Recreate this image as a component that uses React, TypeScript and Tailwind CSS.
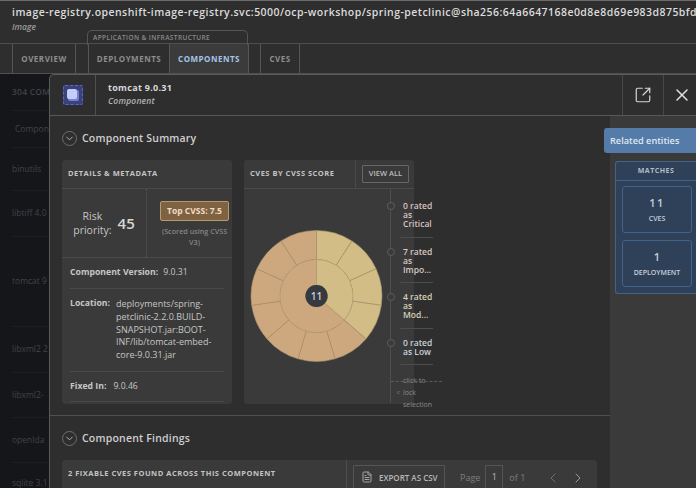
import React from "react";
import { ChevronDown, ChevronLeft, ChevronRight, FileText, SquareArrowOutUpRight, X } from "lucide-react";

const font = { fontFamily: '"Open Sans", sans-serif' };

function Donut() {
  const cx = 72.5;
  const cy = 107;
  const pt = (r: number, deg: number) => {
    const a = ((deg - 90) * Math.PI) / 180;
    return `${cx + r * Math.cos(a)} ${cy + r * Math.sin(a)}`;
  };
  const sector = (r0: number, r1: number, s: number, e: number) => {
    const large = e - s > 180 ? 1 : 0;
    return `M ${pt(r1, s)} A ${r1} ${r1} 0 ${large} 1 ${pt(r1, e)} L ${pt(r0, e)} A ${r0} ${r0} 0 ${large} 0 ${pt(r0, s)} Z`;
  };
  const step = 360 / 11;
  const yellow = "#d1bd85";
  const orange = "#cda87e";
  return (
    <svg width="146" height="214" className="block shrink-0">
      {Array.from({ length: 11 }).map((_, i) => (
        <path
          key={i}
          d={sector(36.5, 65.5, i * step, (i + 1) * step)}
          fill={i < 4 ? yellow : orange}
          stroke="#a8906c"
          strokeWidth="0.6"
        />
      ))}
      <path d={sector(11, 36.5, 0, 4 * step)} fill={yellow} stroke="#b39f73" strokeWidth="0.6" />
      <path d={sector(11, 36.5, 4 * step, 360)} fill={orange} stroke="#b39f73" strokeWidth="0.6" />
      <circle cx={cx} cy={cy} r="11" fill="#363a40" />
      <text x={cx} y={cy + 3.5} textAnchor="middle" fontSize="10" fontWeight="600" fill="#c9ccd0" style={font}>
        11
      </text>
    </svg>
  );
}

function LegendItem({
  lines,
  color,
  h,
  dot,
  text,
}: {
  lines: string[];
  color: string;
  h: string;
  dot: string;
  text: string;
}) {
  return (
    <div className={`relative pl-[12px] ${h}`}>
      <span className={`absolute left-[-4px] h-[8px] w-[8px] rounded-full border border-[#5e5e5e] bg-[#3a3a3a] ${dot}`} />
      <div className={`text-[8.5px] font-semibold leading-[9px] ${text}`} style={{ color }}>
        {lines.map((l) => (
          <div key={l} className="whitespace-nowrap">
            {l}
          </div>
        ))}
      </div>
      <div className="absolute bottom-0 left-[9px] h-px w-[33px] bg-[#4d4d4d]" />
    </div>
  );
}

const rows: [string, string][] = [
  ["304 COM", "h-[37px] font-semibold tracking-wide"],
  ["Compon", "h-[37px] pl-[3px]"],
  ["binutils", "h-[43px]"],
  ["libtiff 4.0", "h-[46px]"],
  ["tomcat 9", "h-[90px]"],
  ["libxml2 2", "h-[46px]"],
  ["libxml2-", "h-[45px]"],
  ["openlda", "h-[45px]"],
  ["sqlite 3.1", "h-[42px]"],
];

function Tab({ label, w, active, sep }: { label: string; w: string; active?: boolean; sep?: boolean }) {
  return (
    <div
      className={`flex h-full items-center justify-center text-[8px] font-bold tracking-[0.5px] ${w} ${
        active ? "bg-[#3b3b3b] text-[#a3c4e8]" : "text-[#8d8d8d]"
      } ${sep ? "border-l border-[#555]" : ""}`}
    >
      {label}
    </div>
  );
}

export default function App() {
  return (
    <div className="relative flex h-[488px] w-[696px] flex-col overflow-hidden bg-[#2e2e2e]" style={font}>
      <div className="h-[1px] bg-[#6a6a6a]" />
      <header className="flex h-[43px] shrink-0 flex-col overflow-hidden border-b border-[#505050] pl-[12px] pt-[4px]">
        <div className="whitespace-nowrap text-[10.5px] font-semibold leading-[15px] tracking-[0.45px] text-[#dcdcdc]">
          image-registry.openshift-image-registry.svc:5000/ocp-workshop/spring-petclinic@sha256:64a6647168e0d8e8d69e983d875bfda7c
        </div>
        <div className="text-[8.5px] font-semibold italic leading-[14px] text-[#9a9a9a]">Image</div>
      </header>

      <nav className="flex h-[30px] shrink-0 items-stretch border-b border-[#505050] pl-[12px]">
        <div className="flex border-x border-[#555]">
          <Tab label="OVERVIEW" w="w-[62px]" />
        </div>
        <div className="w-[12px]" />
        <div className="flex border-x border-[#555]">
          <Tab label="DEPLOYMENTS" w="w-[80px]" />
          <Tab label="COMPONENTS" w="w-[79px]" active sep />
        </div>
        <div className="w-[11px]" />
        <div className="flex border-x border-[#555]">
          <Tab label="CVES" w="w-[38px]" />
        </div>
      </nav>

      <div className="absolute left-[87px] top-[30px] flex h-[15px] w-[161px] items-center rounded-t-[5px] border border-b-0 border-[#555] pl-[5px] text-[6.5px] font-semibold tracking-[0.4px] text-[#8a8a8a]">
        APPLICATION &amp; INFRASTRUCTURE
      </div>

      <main className="flex-1 overflow-hidden bg-[#15161a] pl-[12px]">
        {rows.map(([t, c]) => (
          <div key={t} className={`flex items-center whitespace-nowrap border-b border-[#1d1e22] text-[8.5px] text-[#414247] ${c}`}>
            {t}
          </div>
        ))}
      </main>

      <section className="absolute left-[49px] top-[74px] flex h-[414px] w-[647px] flex-col rounded-tl-[5px] border-l border-t border-[#5a5a5a] bg-[#2e2e2e]">
        <div className="flex h-[41px] shrink-0 border-b border-[#585858]">
          <div className="flex w-[46px] items-center justify-center border-r border-[#505050]">
            <div className="relative h-[20px] w-[20px] rounded-[2px] border border-dashed border-[#5a66c8] bg-[#39427a]">
              <div className="absolute left-[4px] top-[4px] h-[11px] w-[11px] rounded-[2px] bg-[#7481d0]" />
              <div className="absolute left-[3px] top-[3px] h-[10px] w-[10px] rounded-[2px] bg-[#c3cdfa]" />
            </div>
          </div>
          <div className="flex-1 pl-[12px] pt-[6px]">
            <div className="text-[9px] font-bold leading-[13px] tracking-[0.3px] text-[#d8d8d8]">tomcat 9.0.31</div>
            <div className="text-[8.5px] font-semibold italic leading-[13px] tracking-[0.2px] text-[#b4b4b4]">Component</div>
          </div>
          <div className="flex w-[41px] items-center justify-center border-l border-[#484848] text-[#d5d5d5]">
            <SquareArrowOutUpRight size={18} strokeWidth={1.6} />
          </div>
          <div className="flex w-[33px] items-center justify-center border-l border-[#484848] pl-[3px] text-[#e0e0e0]">
            <X size={20} strokeWidth={1.8} />
          </div>
        </div>

        <div className="flex min-h-0 flex-1">
          <div className="w-[560px] shrink-0 overflow-hidden">
            <div className="flex h-[44px] items-center gap-[5px] pl-[12px] pt-[1px]">
              <span className="flex h-[15px] w-[15px] items-center justify-center rounded-full border border-[#6e6e6e] text-[#bdbdbd]">
                <ChevronDown size={11} />
              </span>
              <span className="text-[10.5px] font-semibold tracking-[0.2px] text-[#cfcfcf]">Component Summary</span>
            </div>

            <div className="flex h-[244px] gap-[12px] pl-[12px]">
              <div className="flex h-[244px] w-[170px] shrink-0 flex-col rounded-[3px] bg-[#3a3a3a]">
                <div className="flex h-[29px] items-center border-b border-[#4a4a4a] pl-[6px] text-[7.5px] font-bold tracking-[0.5px] text-[#c4c4c4]">
                  DETAILS &amp; METADATA
                </div>
                <div className="flex h-[69px] border-b border-[#4a4a4a]">
                  <div className="flex w-[85px] items-center justify-center gap-[6px] border-r border-dotted border-[#555]">
                    <div className="text-center text-[10.5px] leading-[14.5px] text-[#c4c4c4]">
                      Risk
                      <br />
                      priority:
                    </div>
                    <div className="text-[15px] font-semibold text-[#d6d6d6]">45</div>
                  </div>
                  <div className="flex flex-1 flex-col items-center pl-[10px] pt-[12px]">
                    <div className="flex h-[20px] w-[69px] items-center justify-center rounded-[2px] border border-[#b79a6b] bg-[#7f6242] text-[8.5px] font-bold text-[#f0dcc0]">
                      Top CVSS: 7.5
                    </div>
                    <div className="mt-[5px] whitespace-nowrap text-center text-[7.2px] font-semibold leading-[11px] text-[#858585]">
                      (Scored using CVSS
                      <br />
                      V3)
                    </div>
                  </div>
                </div>
                <div className="flex-1 px-[8px] text-[8.7px] text-[#c6c6c6]">
                  <div className="flex h-[31px] items-center gap-[5px] border-b border-[#4a4a4a]">
                    <span className="font-bold">Component Version:</span>
                    <span>9.0.31</span>
                  </div>
                  <div className="flex h-[83px] items-center gap-[6px] border-b border-[#4a4a4a]">
                    <span className="self-start pt-[8px] font-bold leading-[13px]">Location:</span>
                    <span className="w-[104px] text-[9px] leading-[12.8px]">
                      deployments/spring-
                      <br />
                      petclinic-2.2.0.BUILD-
                      <br />
                      SNAPSHOT.jar:BOOT-
                      <br />
                      INF/lib/tomcat-embed-
                      <br />
                      core-9.0.31.jar
                    </span>
                  </div>
                  <div className="flex h-[30px] items-center gap-[7px] border-b border-[#4a4a4a]">
                    <span className="font-bold">Fixed In:</span>
                    <span>9.0.46</span>
                  </div>
                </div>
              </div>

              <div className="flex h-[244px] w-[170px] shrink-0 flex-col rounded-[3px] bg-[#3a3a3a]">
                <div className="flex h-[29px] shrink-0 items-center border-b border-[#4a4a4a]">
                  <div className="w-[111px] pl-[6px] text-[7.5px] font-bold tracking-[0.5px] text-[#c4c4c4]">CVES BY CVSS SCORE</div>
                  <div className="flex h-full flex-1 items-center border-l border-[#4a4a4a] pl-[6px]">
                    <div className="flex h-[18px] w-[47px] items-center justify-center rounded-[1px] border border-[#666] text-[7.5px] font-semibold text-[#bdbdbd]">
                      VIEW ALL
                    </div>
                  </div>
                </div>
                <div className="flex">
                  <Donut />
                  <div className="h-[214px] w-[52px] shrink-0 border-l border-[#4f4f4f]">
                    <LegendItem lines={["0 rated", "as", "Critical"]} color="#d8c2c2" h="h-[49px]" dot="top-[13px]" text="pt-[12px]" />
                    <LegendItem lines={["7 rated", "as", "Impo..."]} color="#d8c8c0" h="h-[45px]" dot="top-[10px]" text="pt-[9px]" />
                    <LegendItem lines={["4 rated", "as", "Mod..."]} color="#d8d0b8" h="h-[46px]" dot="top-[10px]" text="pt-[9px]" />
                    <LegendItem lines={["0 rated", "as Low"]} color="#c8d2dc" h="h-[36px]" dot="top-[10px]" text="pt-[9px]" />
                    <div className="relative pl-[12px] pt-[10px] text-[7px] leading-[12px] text-[#8a8a8a]">
                      <div className="absolute left-0 right-0 top-[16px] border-t border-dashed border-[#5a5a5a]" />
                      <span className="absolute left-[6px] top-[21px] text-[6px]">c</span>
                      click to
                      <br />
                      lock
                      <br />
                      selection
                    </div>
                  </div>
                </div>
              </div>
            </div>

            <div className="mt-[11px] h-px bg-[#505050]" />

            <div className="flex h-[44px] items-center gap-[5px] pl-[12px] pt-[1px]">
              <span className="flex h-[15px] w-[15px] items-center justify-center rounded-full border border-[#6e6e6e] text-[#bdbdbd]">
                <ChevronDown size={11} />
              </span>
              <span className="text-[10.5px] font-semibold tracking-[0.2px] text-[#cfcfcf]">Component Findings</span>
            </div>

            <div className="ml-[12px] flex h-[40px] w-[535px] rounded-t-[3px] bg-[#3a3a3a]">
              <div className="flex h-[28px] w-[285px] items-center border-r border-[#4d4d4d] pl-[6px] text-[7.5px] font-bold tracking-[0.5px] text-[#c4c4c4]">
                2 FIXABLE CVES FOUND ACROSS THIS COMPONENT
              </div>
              <div className="ml-[6px] mt-[5px] flex h-[30px] w-[92px] gap-[6px] rounded-[1px] border border-[#555] pl-[7px] pt-[5px] text-[8px] font-semibold text-[#b8b8b8]">
                <FileText size={12} className="text-[#a5a5a5]" />
                <span className="whitespace-nowrap leading-[13px]">EXPORT AS CSV</span>
              </div>
              <div className="ml-[15px] mt-[5px] flex h-[30px] text-[9px] text-[#7e7e7e]">
                <span className="pt-[6px]">Page</span>
                <span className="ml-[5px] flex h-[24px] w-[18px] items-center justify-center border border-[#555] text-[#bdbdbd]">1</span>
                <span className="ml-[6px] pt-[6px]">of 1</span>
                <ChevronLeft size={16} strokeWidth={1.5} className="ml-[20px] mt-[5px] text-[#6f6f6f]" />
                <ChevronRight size={16} strokeWidth={1.5} className="ml-[9px] mt-[5px] text-[#9a9a9a]" />
              </div>
            </div>
          </div>

          <aside className="relative flex-1 bg-[#3a3a3a] pt-[45px]">
            <div className="absolute left-[-6px] top-[12px] flex h-[25px] w-[93px] items-center rounded-l-[3px] bg-[#557ba8] pl-[6px] text-[9.2px] font-semibold text-[#dfe8f2]">
              Related entities
            </div>
            <div className="ml-[5px] flex h-[133px] flex-col rounded-l-[3px] border border-r-0 border-[#42638a] bg-[#2f4158]">
              <div className="flex h-[19px] shrink-0 items-center justify-center border-b border-[#42638a] pt-[1px] text-[7px] font-bold tracking-[0.5px] text-[#b3bdc9]">
                MATCHES
              </div>
              <div className="flex flex-col gap-[7px] pl-[6px] pr-[4px] pt-[5px]">
                <div className="flex h-[47px] flex-col items-center justify-center rounded-[3px] border border-[#42638a] text-[#c5ced8]">
                  <span className="text-[11px] font-semibold leading-[15px] tracking-[1.5px]">11</span>
                  <span className="mt-[4px] text-[7px] font-semibold leading-[10px]">CVES</span>
                </div>
                <div className="flex h-[47px] flex-col items-center justify-center rounded-[3px] border border-[#42638a] text-[#c5ced8]">
                  <span className="text-[11px] font-semibold leading-[15px]">1</span>
                  <span className="mt-[4px] text-[7px] font-semibold leading-[10px]">DEPLOYMENT</span>
                </div>
              </div>
            </div>
          </aside>
        </div>
      </section>
    </div>
  );
}
